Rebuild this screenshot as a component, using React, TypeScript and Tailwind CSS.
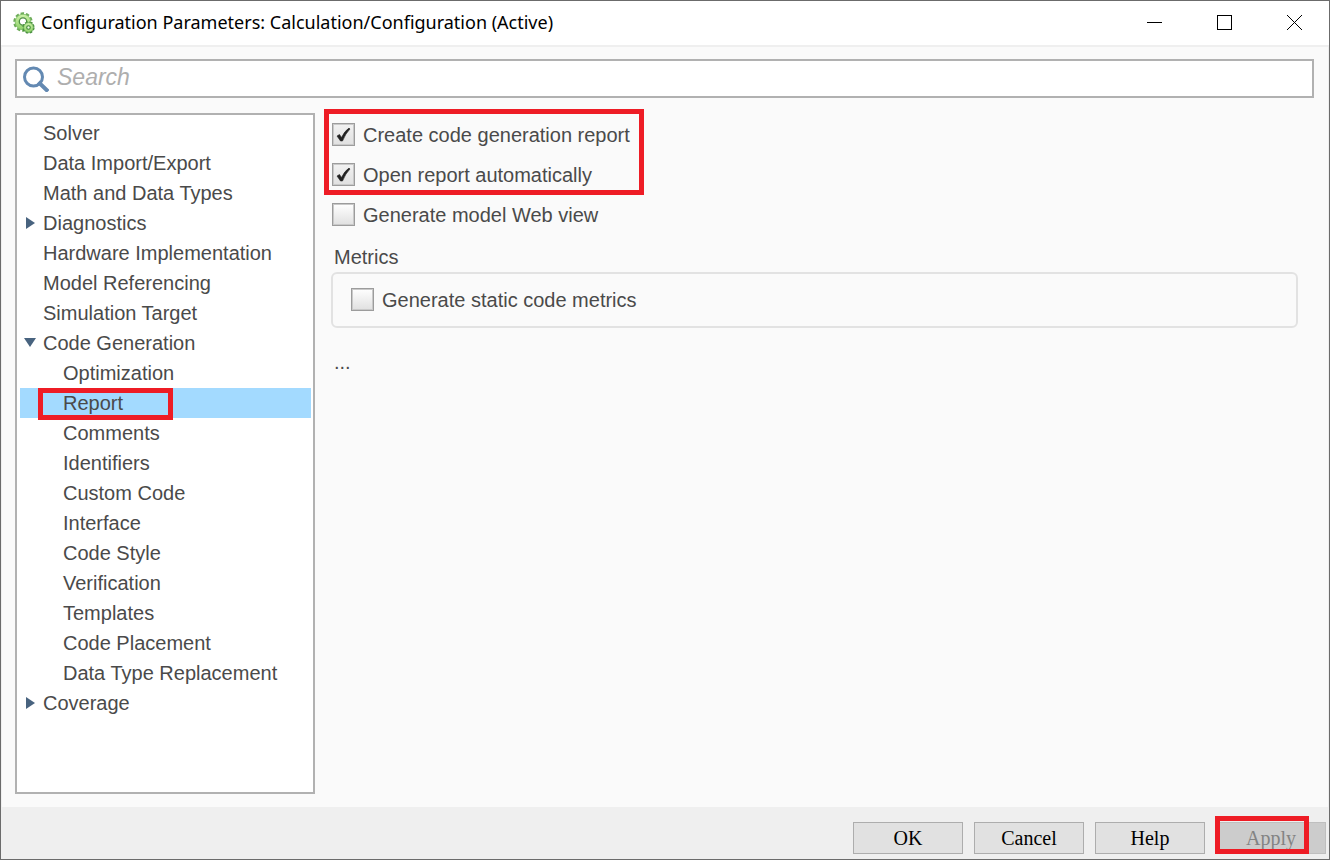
import { useState } from "react";
import clsx from "clsx";

type TreeItem = {
  label: string;
  child?: boolean;
  arrow?: "right" | "down";
};

const treeItems: TreeItem[] = [
  { label: "Solver" },
  { label: "Data Import/Export" },
  { label: "Math and Data Types" },
  { label: "Diagnostics", arrow: "right" },
  { label: "Hardware Implementation" },
  { label: "Model Referencing" },
  { label: "Simulation Target" },
  { label: "Code Generation", arrow: "down" },
  { label: "Optimization", child: true },
  { label: "Report", child: true },
  { label: "Comments", child: true },
  { label: "Identifiers", child: true },
  { label: "Custom Code", child: true },
  { label: "Interface", child: true },
  { label: "Code Style", child: true },
  { label: "Verification", child: true },
  { label: "Templates", child: true },
  { label: "Code Placement", child: true },
  { label: "Data Type Replacement", child: true },
  { label: "Coverage", arrow: "right" },
];

function GearsIcon() {
  return (
    <svg width="22" height="22" viewBox="0 0 22 22" aria-hidden="true">
      <defs>
        <linearGradient id="gear" x1="0" y1="0" x2="0" y2="1">
          <stop offset="0" stopColor="#cdf2a8" />
          <stop offset="1" stopColor="#8ed168" />
        </linearGradient>
      </defs>
      {/* big gear: teeth, body, hole */}
      <circle cx="10" cy="10" r="8.4" fill="none" stroke="#6cab58" strokeWidth="2.6" strokeDasharray="3.4 1.88" />
      <circle cx="10" cy="10" r="7.8" fill="url(#gear)" stroke="#7dbb66" strokeWidth="0.8" />
      <circle cx="10" cy="9.5" r="3.7" fill="#fff" stroke="#4f8f43" strokeWidth="1.3" />
      {/* small gear in front */}
      <circle cx="15.5" cy="15.5" r="5" fill="none" stroke="#3f8737" strokeWidth="2.2" strokeDasharray="2.5 1.43" />
      <circle cx="15.5" cy="15.5" r="4.9" fill="url(#gear)" stroke="#5ca34c" strokeWidth="0.8" />
      <circle cx="15.5" cy="15.5" r="1.8" fill="#edfbe2" stroke="#3f8737" strokeWidth="1.1" />
    </svg>
  );
}

function TitleBar() {
  return (
    <header className="flex h-11 items-center bg-white pl-3">
      <GearsIcon />
      <h1 className="ml-1.5 grow pb-0.5 font-['Noto_Sans',sans-serif] text-[18px] leading-6 text-black">
        Configuration Parameters: Calculation/Configuration (Active)
      </h1>
      <div className="flex pb-px">
        <button aria-label="Minimize" className="flex h-10 w-[70px] items-center justify-center">
          <svg width="15" height="15" stroke="#000" shapeRendering="crispEdges">
            <path d="M0 7.5H15" />
          </svg>
        </button>
        <button aria-label="Maximize" className="flex h-10 w-[70px] items-center justify-center">
          <svg width="15" height="15" stroke="#000" fill="none" shapeRendering="crispEdges">
            <rect x="0.5" y="0.5" width="14" height="14" />
          </svg>
        </button>
        <button aria-label="Close" className="flex h-10 w-[70px] items-center justify-center">
          <svg width="15" height="15" stroke="#000">
            <path d="M0 0L15 15M15 0L0 15" />
          </svg>
        </button>
      </div>
    </header>
  );
}

function SearchBar() {
  return (
    <label className="flex h-[39px] items-center border-2 border-[#b1b1b1] bg-white pl-1.5">
      <svg width="26" height="26" viewBox="0 0 26 26" fill="none" stroke="#6389b2" aria-hidden="true">
        <circle cx="10.5" cy="11" r="9" strokeWidth="3" />
        <path d="M16.8 17.4L23.6 24" strokeWidth="4" strokeLinecap="square" />
      </svg>
      <input
        type="text"
        aria-label="Search"
        placeholder="Search"
        className="ml-2 h-full grow pb-0.5 text-[23px] leading-7 outline-none placeholder:italic placeholder:text-[#aeaeae]"
      />
    </label>
  );
}

function Tree({ selected, onSelect }: { selected: string; onSelect: (label: string) => void }) {
  return (
    <nav className="w-[300px] shrink-0 border-2 border-[#b1b1b1] bg-white py-[3px] pr-0.5 pl-[3px]">
      <ul>
        {treeItems.map((item) => (
          <li key={item.label} className="relative">
            <button
              onClick={() => onSelect(item.label)}
              className={clsx(
                "flex h-[30px] w-full items-center text-left",
                item.child && "pl-5",
                item.label === selected && "bg-[#a3daff]"
              )}
            >
              <span className="flex w-[23px] shrink-0 pl-1">
                {item.arrow === "right" && (
                  <svg width="12" height="12" fill="#48637f" aria-hidden="true">
                    <path d="M2 0L11 6L2 12Z" />
                  </svg>
                )}
                {item.arrow === "down" && (
                  <svg width="12" height="12" fill="#48637f" aria-hidden="true">
                    <path d="M0 1H12L6 10Z" />
                  </svg>
                )}
              </span>
              {item.label}
            </button>
            {item.label === "Report" && (
              <div className="pointer-events-none absolute top-0 left-[18px] h-8 w-[135px] border-5 border-[#ee1c25]" />
            )}
          </li>
        ))}
      </ul>
    </nav>
  );
}

function CheckOption({ label, defaultChecked }: { label: string; defaultChecked?: boolean }) {
  return (
    <label className="flex h-10 items-center gap-2">
      <span className="grid">
        <input
          type="checkbox"
          defaultChecked={defaultChecked}
          className="peer col-start-1 row-start-1 size-[23px] appearance-none border border-[#9c9c9c] bg-linear-to-b from-white to-[#e0e0e0] inset-ring inset-ring-[#c9c9c9] checked:from-[#f2f2f2]"
        />
        <svg
          viewBox="0 0 23 23"
          className="pointer-events-none invisible col-start-1 row-start-1 size-[23px] peer-checked:visible"
          aria-hidden="true"
        >
          <path d="M5 13L7.5 11.5L9.5 14.5Q12.5 8 17 5L18 6Q13.5 10.5 10.5 18H8.5Z" fill="#222" stroke="#222" strokeWidth="0.6" />
        </svg>
      </span>
      <span className="pt-px">{label}</span>
    </label>
  );
}

function ReportPane() {
  return (
    <section className="flex min-w-0 grow flex-col pt-px pr-4 pl-4">
      <div className="relative pl-px">
        <CheckOption label="Create code generation report" defaultChecked />
        <CheckOption label="Open report automatically" defaultChecked />
        <div className="pointer-events-none absolute -top-[5px] -left-[7px] h-[86px] w-80 border-5 border-[#ee1c25]" />
      </div>
      <div className="pl-px">
        <CheckOption label="Generate model Web view" />
      </div>
      <fieldset className="mt-2">
        <legend className="h-[30px] pl-[3px] leading-[30px]">Metrics</legend>
        <div className="flex h-14 items-center rounded-md border-2 border-[#e2e2e2] pb-px pl-[18px]">
          <CheckOption label="Generate static code metrics" />
        </div>
      </fieldset>
      <button aria-label="More options" className="mt-5 self-start pl-[3px] leading-7">...</button>
    </section>
  );
}

const footerButton = "h-8 w-[110px] border border-[#adadad] bg-[#e1e1e1]";

function Footer() {
  return (
    <footer className="flex h-13 items-center justify-end gap-[11px] bg-[#efefef] pt-2.5 pr-[3px] font-['Liberation_Serif',serif] text-[20px] text-black">
      <button className={footerButton}>OK</button>
      <button className={footerButton}>Cancel</button>
      <button className={footerButton}>Help</button>
      <div className="relative flex">
        <button disabled className="h-8 w-[110px] border border-[#bfbfbf] bg-[#cccccc] text-[#838383]">
          Apply
        </button>
        <div className="pointer-events-none absolute -top-1.5 -left-px h-[38px] w-[94px] border-5 border-[#ee1c25]" />
      </div>
    </footer>
  );
}

export default function App() {
  const [selected, setSelected] = useState("Report");

  return (
    <div className="flex min-h-screen flex-col border border-[#6b6b6b] bg-[#efefef] font-['Liberation_Sans',Arial,sans-serif] text-[20px] text-[#4a4a4a]">
      <TitleBar />
      <main className="mx-px mt-0.5 flex grow flex-col gap-[15px] bg-[#fafafa] pt-3 pr-3.5 pb-[13px] pl-[13px]">
        <SearchBar />
        <div className="flex grow">
          <Tree selected={selected} onSelect={setSelected} />
          <ReportPane />
        </div>
      </main>
      <Footer />
    </div>
  );
}
